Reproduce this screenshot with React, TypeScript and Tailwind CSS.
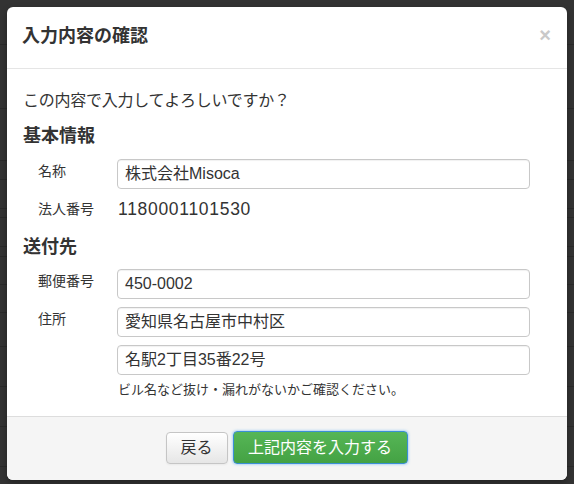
import React from "react";

const font = { fontFamily: '"Liberation Sans", "Noto Sans CJK JP", sans-serif' };

function Field({ value }: { value: string }) {
  return (
    <div className="h-[30px] w-[413px] rounded-[4px] border border-[#c8c8c8] bg-white px-[7px] flex items-center text-[16px] text-[#333] shadow-[inset_0_1px_1px_rgba(0,0,0,0.06)]">
      {value}
    </div>
  );
}

export default function App() {
  const bgRows = [45, 64, 52, 19, 29, 9, 29, 10, 28, 28, 34, 40, 40, 40];
  return (
    <div className="relative w-[574px] h-[484px] overflow-hidden bg-[#333]" style={font}>
      <div className="flex flex-col">
        {bgRows.map((h, i) => (
          <div key={i} className="border-b border-[#2a2a2a]" style={{ height: h }} />
        ))}
      </div>
      <div className="absolute left-[7px] top-[7px] w-[560px] h-[473px] rounded-[6px] bg-white overflow-hidden flex flex-col shadow-[0_3px_7px_rgba(0,0,0,0.3)]">
        {/* header */}
        <div className="h-[62px] border-b border-[#e5e5e5] flex items-center justify-between pl-[15px] pr-[16px] shrink-0">
          <div className="text-[18px] font-bold text-[#333] leading-[24px] mt-[-3px]">入力内容の確認</div>
          <div className="text-[20px] font-bold text-[#c9c9c9] leading-none mt-[-5px]">×</div>
        </div>
        {/* body */}
        <div className="flex-1 pl-[16px] pt-[20px] text-[#333]">
          <div className="text-[16px] leading-[24px] tracking-[-0.25px]">この内容で入力してよろしいですか？</div>
          <div className="mt-[11px] text-[18px] font-bold leading-[24px]">基本情報</div>
          <div className="mt-[11px] flex">
            <div className="w-[94px] pl-[15px] pt-[2px] text-[14px] leading-[20px]">名称</div>
            <Field value="株式会社Misoca" />
          </div>
          <div className="mt-[8px] flex items-center h-[24px]">
            <div className="w-[94px] pl-[15px] text-[14px] leading-[20px]">法人番号</div>
            <div className="text-[17.5px] leading-[24px] pl-[1px] tracking-[0.7px]">1180001101530</div>
          </div>
          <div className="mt-[14px] text-[18px] font-bold leading-[24px]">送付先</div>
          <div className="mt-[10px] flex">
            <div className="w-[94px] pl-[15px] pt-[2px] text-[14px] leading-[20px]">郵便番号</div>
            <Field value="450-0002" />
          </div>
          <div className="mt-[8px] flex">
            <div className="w-[94px] pl-[15px] pt-[2px] text-[14px] leading-[20px]">住所</div>
            <div className="flex flex-col gap-[8px]">
              <Field value="愛知県名古屋市中村区" />
              <Field value="名駅2丁目35番22号" />
              <div className="text-[13px] leading-[18px] mt-[-2px] pl-[1px]">
                ビル名など抜け・漏れがないかご確認ください。
              </div>
            </div>
          </div>
        </div>
        {/* footer */}
        <div className="h-[64px] shrink-0 border-t border-[#dddddd] bg-[#f5f5f5] flex justify-center pt-[15px] gap-[5px] pr-[1px]">
          <button className="h-[32px] w-[62px] rounded-[4px] border border-[#c5c5c5] bg-gradient-to-b from-white to-[#e6e6e6] text-[16px] text-[#333] flex items-center justify-center shadow-[inset_0_1px_0_rgba(255,255,255,0.2),0_1px_2px_rgba(0,0,0,0.05)]">
            戻る
          </button>
          <button className="h-[33px] w-[175px] mt-[-1px] rounded-[4px] border border-[#3b8fd6] bg-gradient-to-b from-[#56b656] to-[#44a244] text-[16px] text-white flex items-center justify-center shadow-[0_0_3px_rgba(82,168,236,0.8)]">
            上記内容を入力する
          </button>
        </div>
      </div>
    </div>
  );
}
